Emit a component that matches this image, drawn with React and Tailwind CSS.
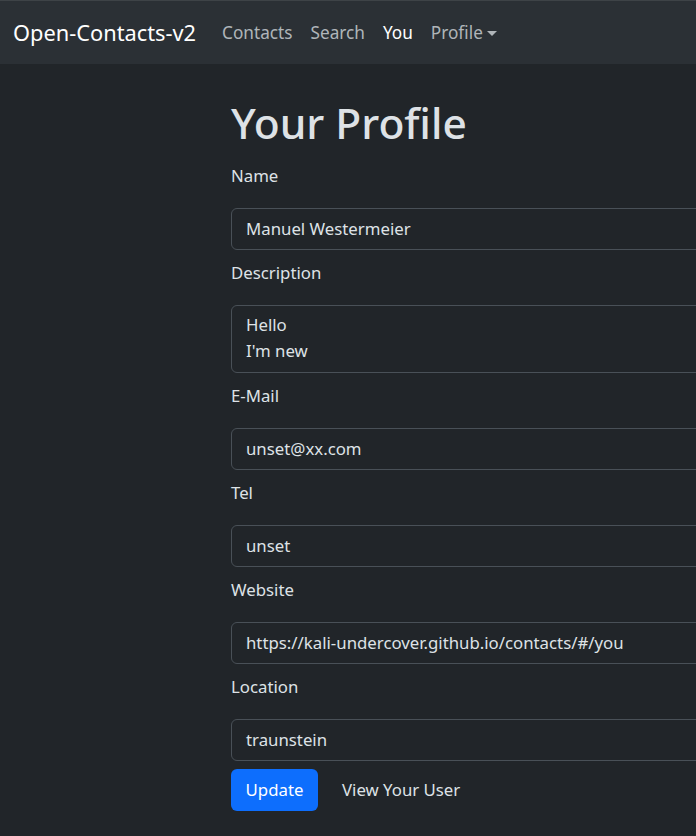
export default function App() {
  const fields = [
    { label: 'Name', value: 'Manuel Westermeier' },
    { label: 'Description', value: "Hello\nI'm new", area: true },
    { label: 'E-Mail', value: 'unset@xx.com' },
    { label: 'Tel', value: 'unset' },
    { label: 'Website', value: 'https://kali-undercover.github.io/contacts/#/you' },
    { label: 'Location', value: 'traunstein' },
  ];

  return (
    <div className="min-h-[836px] w-[696px] overflow-hidden bg-[#212529] text-[#dee2e6] text-[16.8px] leading-[26.4px]" style={{ fontFamily: '"Noto Sans", sans-serif' }}>
      <nav className="h-[64px] bg-[#2b3035] border-t border-[#3e4347] flex items-center pt-[2px]">
        <span className="ml-[13px] text-[21.8px] text-white">Open-Contacts-v2</span>
        <div className="ml-[26px] flex items-center gap-[18px] text-[17.2px] text-[rgba(222,226,230,0.75)]">
          <span>Contacts</span>
          <span>Search</span>
          <span className="text-white">You</span>
          <span className="flex items-center">
            Profile
            <span className="ml-[4px] w-0 h-0 border-l-[5px] border-r-[5px] border-t-[5px] border-l-transparent border-r-transparent border-t-[rgba(222,226,230,0.75)]"></span>
          </span>
        </div>
      </nav>

      <main className="ml-[231px] w-[600px]">
        <h1 className="mt-[32px] mb-[14px] text-[42.5px] leading-[53px] font-medium">Your Profile</h1>
        {fields.map((f, i) => (
          <div key={i}>
            <label className={`block h-[26px] mb-[19px] ${i > 0 ? 'mt-[10px]' : ''}`}>{f.label}</label>
            {f.area ? (
              <div className="border border-[#495057] rounded-[6px] px-[14px] py-[6px] h-[68px] whitespace-pre-line">{f.value}</div>
            ) : (
              <div className="border border-[#495057] rounded-[6px] px-[14px] h-[42px] flex items-center">{f.value}</div>
            )}
          </div>
        ))}
        <div className="mt-[8px] flex items-center gap-[11px]">
          <button className="h-[42px] w-[87px] rounded-[6px] bg-[#0d6efd] text-white">Update</button>
          <button className="h-[42px] px-[13px] text-[#dee2e6]">View Your User</button>
        </div>
      </main>
    </div>
  );
}
